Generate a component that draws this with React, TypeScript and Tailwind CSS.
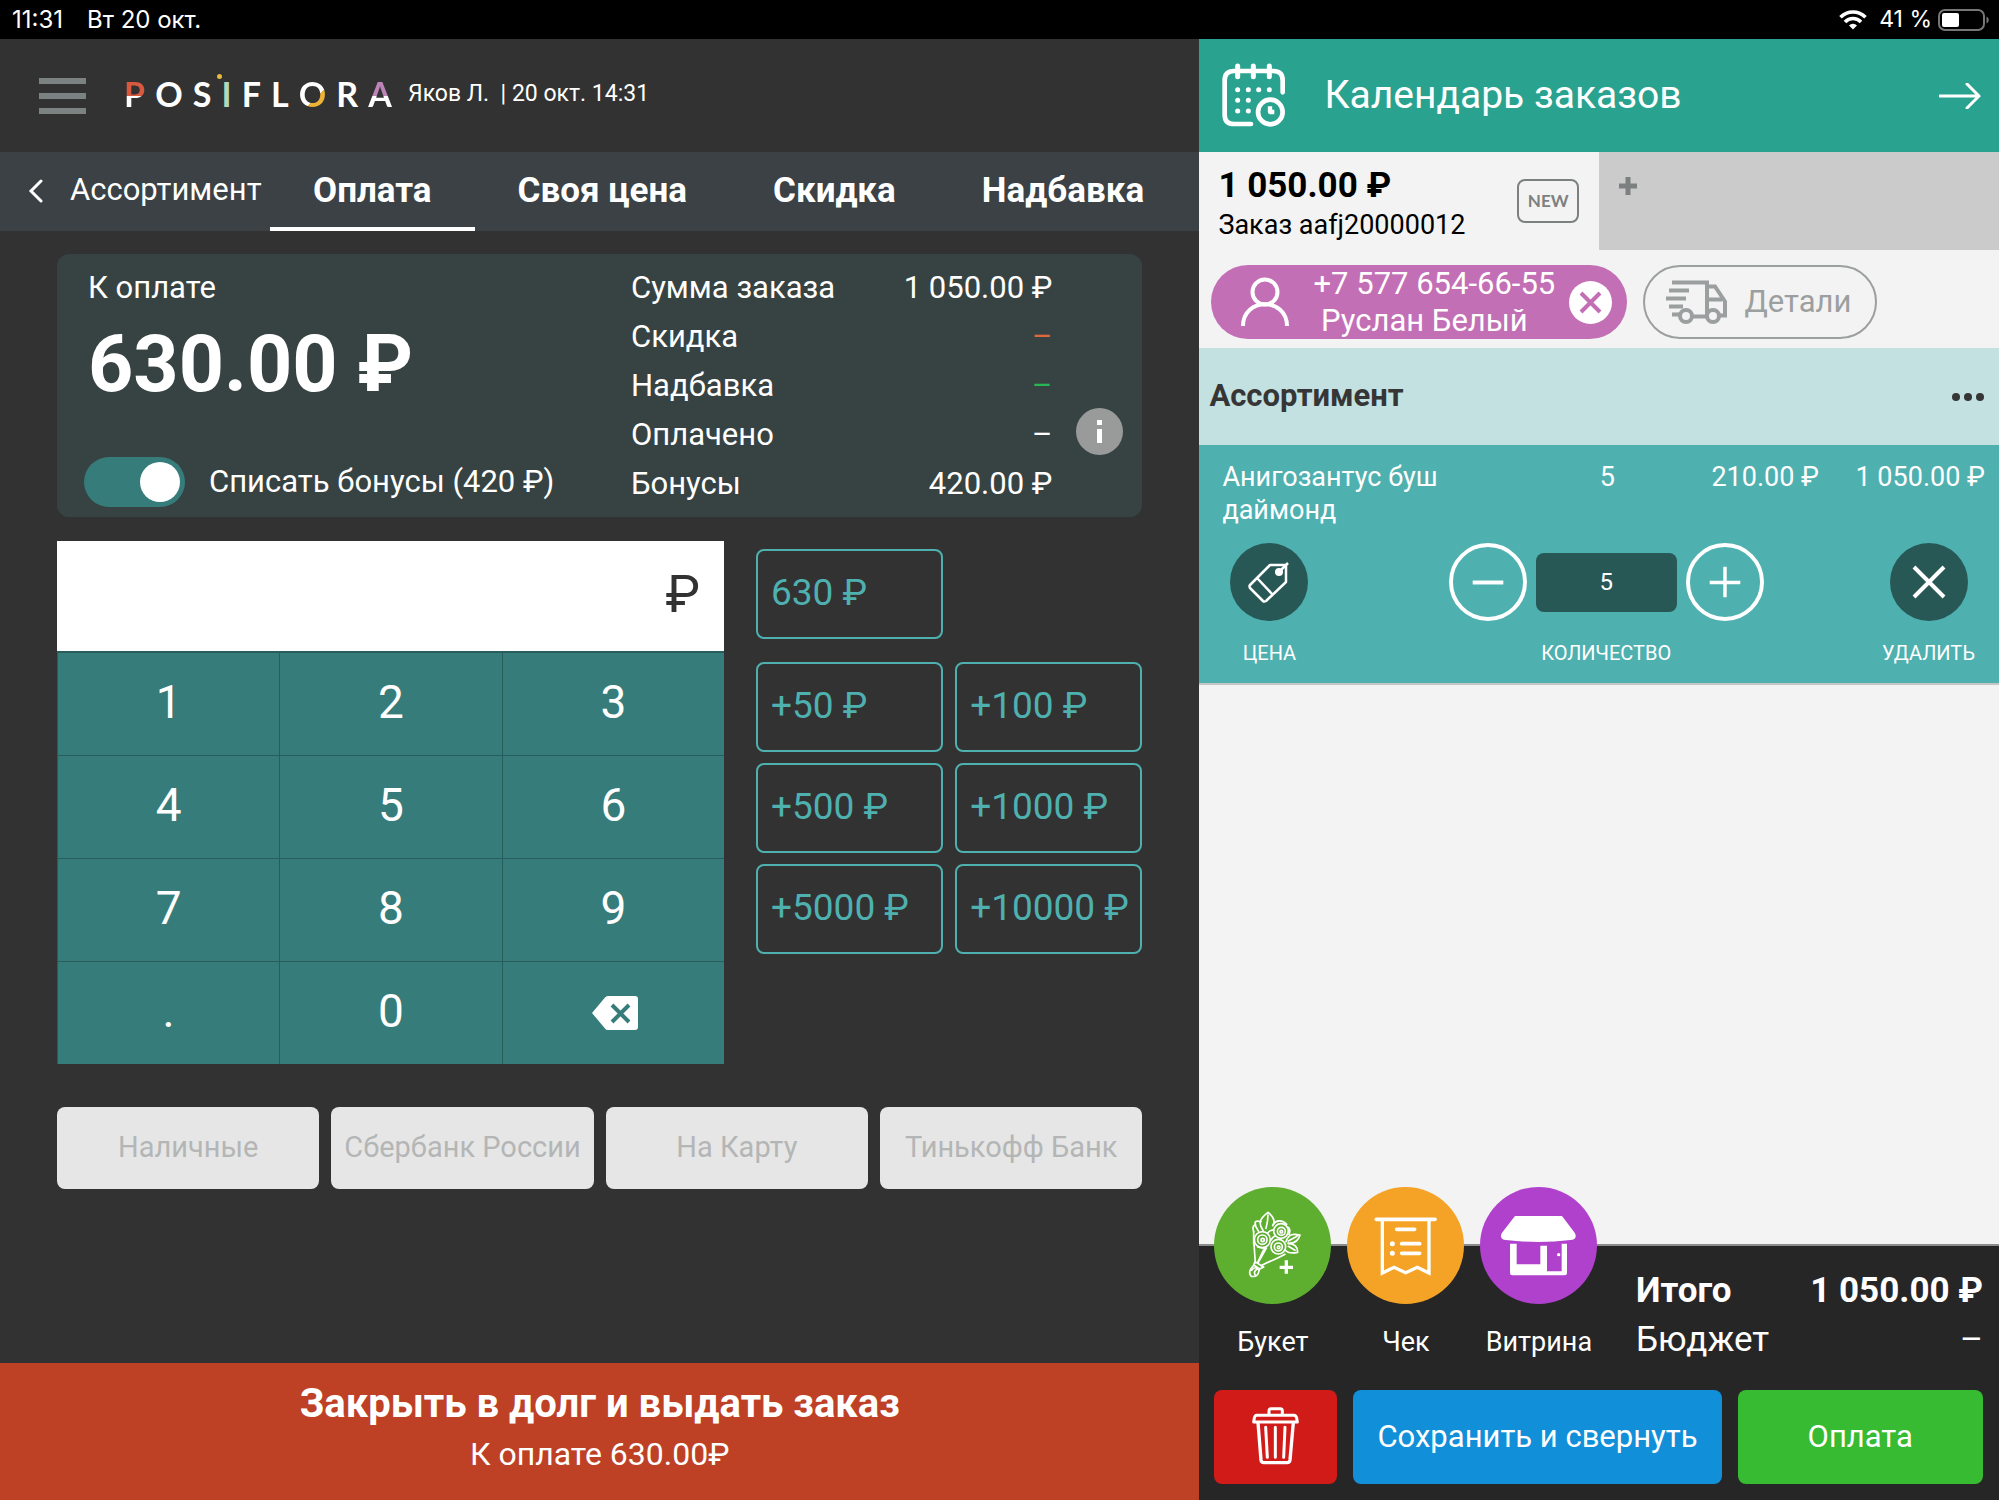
import { useState } from 'react';
import type { ReactNode } from 'react';

const totals = [
  { label: 'Сумма заказа', value: '1 050.00 ₽', color: 'text-white' },
  { label: 'Скидка', value: '–', color: 'text-[#e0663c]' },
  { label: 'Надбавка', value: '–', color: 'text-[#27b854]' },
  { label: 'Оплачено', value: '–', color: 'text-white' },
  { label: 'Бонусы', value: '420.00 ₽', color: 'text-white' }
];

const tabs = ['Оплата', 'Своя цена', 'Скидка', 'Надбавка'];
const keys = ['1', '2', '3', '4', '5', '6', '7', '8', '9', '.', '0'];
const quickSums = ['+50 ₽', '+100 ₽', '+500 ₽', '+1000 ₽', '+5000 ₽', '+10000 ₽'];
const payMethods = ['Наличные', 'Сбербанк России', 'На Карту', 'Тинькофф Банк'];

function StatusBar() {
  return (
    <div className="flex h-[39px] items-center justify-between bg-black pl-3 pr-[10px] font-['Inter',sans-serif] text-[24px] text-white">
      <div className="flex gap-6">
        <span>11:31</span>
        <span>Вт 20 окт.</span>
      </div>
      <div className="flex items-center">
        <svg className="mr-3 h-5 w-7" viewBox="0 0 28 20" fill="none" stroke="#fff" strokeWidth="3.6">
          <path d="M1.5 7.2a17.6 17.6 0 0 1 25 0" />
          <path d="M6 11.9a11.2 11.2 0 0 1 16 0" />
          <path d="M14 19.6l-4-4.1a5.6 5.6 0 0 1 8 0z" fill="#fff" stroke="none" />
        </svg>
        <span className="text-[23px]">41 %</span>
        <svg className="ml-1.5 h-[22px] w-[51px]" viewBox="0 0 51 22">
          <rect x="1" y="1" width="45" height="20" rx="6" fill="none" stroke="#767676" strokeWidth="2" />
          <rect x="4" y="4" width="17" height="14" rx="2" fill="#fff" />
          <path d="M48.500 7.500c3 1.500 3 5.500 0 7z" fill="#767676" />
        </svg>
      </div>
    </div>
  );
}

function Logo() {
  return (
    <div
      className="flex w-[268px] justify-between pb-1 font-['Lato',sans-serif] text-[34px] font-bold leading-10 text-white"
      aria-label="Posiflora"
    >
      <span className="bg-[linear-gradient(#d9593f_56%,#fff_56%)] bg-clip-text text-transparent">P</span>
      <span>O</span>
      <span>S</span>
      <span className="relative text-[#b5d8b8]">
        I
        <span className="absolute -left-1 top-0 size-[5px] rounded-full bg-[#e9b93a]" />
      </span>
      <span>F</span>
      <span>L</span>
      <span className="bg-[linear-gradient(135deg,#fff_60%,#ecb436_60%)] bg-clip-text text-transparent">O</span>
      <span>R</span>
      <span className="bg-[linear-gradient(#bd84b8_54%,#fff_54%)] bg-clip-text text-transparent">A</span>
    </div>
  );
}

function PaymentHeader() {
  return (
    <header className="flex h-[113px] items-center pl-[39px]">
      <button type="button" aria-label="Меню" className="mr-[38px] flex flex-col gap-[9px]">
        <span className="h-1.5 w-[47px] bg-[#7c8282]" />
        <span className="h-1.5 w-[47px] bg-[#7c8282]" />
        <span className="h-1.5 w-[47px] bg-[#7c8282]" />
      </button>
      <Logo />
      <p className="ml-4 pb-0.5 text-[23px] text-white">Яков Л.&nbsp; | 20 окт. 14:31</p>
    </header>
  );
}

function PaymentTabs() {
  const [active, setActive] = useState('Оплата');
  return (
    <nav className="flex h-[79px] bg-[#3b4144] text-white">
      <button type="button" className="flex w-[270px] items-center gap-[27px] pb-0.5 pl-7 text-[31px]">
        <svg className="h-6 w-[15px]" viewBox="0 0 15 24" fill="none" stroke="#fff" strokeWidth="3">
          <path d="M13 2 3 12l10 10" strokeLinecap="round" />
        </svg>
        Ассортимент
      </button>
      {tabs.map((tab) => (
        <button
          key={tab}
          type="button"
          onClick={() => setActive(tab)}
          className={
            tab === active
              ? 'border-b-4 border-white px-[43px] pt-1 text-[35px] font-bold'
              : 'border-b-4 border-transparent px-[43px] pt-1 text-[35px] font-bold'
          }
        >
          {tab}
        </button>
      ))}
    </nav>
  );
}

function Summary() {
  const [useBonus, setUseBonus] = useState(true);
  return (
    <section className="flex h-[263px] rounded-xl bg-[#374343] pl-[27px] pr-[19px] text-[31px] text-white">
      <div className="flex w-[547px] flex-col pt-[9px]">
        <span className="pl-1 leading-[49px]">К оплате</span>
        <strong className="pl-1 pt-0.5 text-[79px] font-bold leading-[100px]">630.00 ₽</strong>
        <label className="mt-[43px] flex h-[50px] items-center gap-6">
          <input
            type="checkbox"
            checked={useBonus}
            onChange={(e) => setUseBonus(e.target.checked)}
            className="peer sr-only"
          />
          <span className="flex h-[50px] w-[101px] items-center rounded-full bg-gray-500 px-[5px] peer-checked:justify-end peer-checked:bg-[#367c7a]">
            <span className="size-10 rounded-full bg-white" />
          </span>
          Списать бонусы (420 ₽)
        </label>
      </div>
      <dl className="flex-1 pt-[9px] leading-[49px]">
        {totals.map((row) => (
          <div key={row.label} className="flex justify-between">
            <dt>{row.label}</dt>
            <dd className={row.color}>{row.value}</dd>
          </div>
        ))}
      </dl>
      <div className="flex w-[71px] items-end justify-end pb-[62px]">
        <button type="button" aria-label="Информация" className="size-[47px] rounded-full bg-[#999a9a]">
          <svg viewBox="0 0 47 47" fill="#fff">
            <path d="M21 12h5v5h-5zM21 21h5v14h-5z" />
          </svg>
        </button>
      </div>
    </section>
  );
}

function Keypad() {
  return (
    <div className="w-[667px]">
      <label className="flex h-[110px] items-center bg-white px-6 pb-0.5 text-[52px] text-[#323232]">
        <input type="text" inputMode="decimal" aria-label="Сумма" className="min-w-0 flex-1 text-right outline-none" />
        ₽
      </label>
      <div className="grid grid-cols-3 gap-px bg-[#285d5b] pl-px pt-0.5 text-[46px] text-white">
        {keys.map((key) => (
          <button key={key} type="button" className="h-[102px] bg-[#367c7a] pb-1">
            {key}
          </button>
        ))}
        <button type="button" aria-label="Стереть" className="flex h-[102px] items-center justify-center bg-[#367c7a] pl-1">
          <svg className="h-[34px] w-[46px]" viewBox="0 0 46 34">
            <path d="M13 1.500Q14 0 16 0h27q3 0 3 3v28q0 3-3 3H16q-2 0-3-1.500L0 17z" fill="#fff" />
            <path d="m20 9 17 17M37 9 20 26" stroke="#367c7a" strokeWidth="4" />
          </svg>
        </button>
      </div>
    </div>
  );
}

function QuickSum({ children }: { children: ReactNode }) {
  return (
    <button type="button" className="h-[90px] whitespace-nowrap rounded-lg border-2 border-[#4fb0b0] pb-0.5 pl-[13px] text-left">
      {children}
    </button>
  );
}

function PaymentPane() {
  return (
    <main className="flex flex-col bg-[#323232]">
      <PaymentHeader />
      <PaymentTabs />
      <div className="flex flex-1 flex-col px-[57px] pt-[23px]">
        <Summary />
        <div className="mt-6 flex">
          <Keypad />
          <div className="ml-8 mt-2 grid flex-1 grid-cols-2 content-start gap-x-3 gap-y-[11px] text-[37px] text-[#4fb0b0]">
            <QuickSum>630 ₽</QuickSum>
            <div className="h-[102px]" />
            {quickSums.map((sum) => (
              <QuickSum key={sum}>{sum}</QuickSum>
            ))}
          </div>
        </div>
        <div className="mt-[43px] grid grid-cols-4 gap-3">
          {payMethods.map((method) => (
            <button
              key={method}
              type="button"
              disabled
              className="h-[82px] whitespace-nowrap rounded-lg bg-[#e6e6e6] text-[29px] text-[#b4b6b6]"
            >
              {method}
            </button>
          ))}
        </div>
      </div>
      <button type="button" className="flex h-[137px] flex-col items-center bg-[#be4126] pt-4 text-white">
        <span className="text-[40px] font-bold leading-[50px]">Закрыть в долг и выдать заказ</span>
        <span className="text-[32px] leading-[50px]">К оплате 630.00₽</span>
      </button>
    </main>
  );
}

function CalendarIcon() {
  return (
    <svg className="h-[65px] w-[65px]" viewBox="62 40 195 195" fill="none" stroke="#fff" strokeWidth="14" strokeLinecap="round">
      <path d="M247 128V92q0-28-28-28H101q-28 0-28 28v103q0 28 28 28h51" />
      <path d="M112 49v32M159 49v32M207 49v32" strokeWidth="15" />
      <path d="M112 120h.1M144 120h.1M175 120h.1M207 120h.1M112 152h.1M144 152h.1M112 184h.1M144 184h.1" strokeWidth="15" />
      <circle cx="210" cy="187" r="37" />
      <path d="M209 170v17h13" strokeLinecap="butt" strokeLinejoin="round" strokeWidth="13" />
    </svg>
  );
}

function OrderTabs() {
  return (
    <div className="grid h-[98px] grid-cols-2">
      <button type="button" className="flex items-center justify-between pl-[19px] pr-5 text-left text-black">
        <span className="flex flex-col pt-1.5">
          <strong className="text-[35px] font-bold leading-[42px]">1 050.00 ₽</strong>
          <span className="text-[27px] leading-9">Заказ aafj20000012</span>
        </span>
        <span className="flex h-11 w-[62px] items-center justify-center rounded-lg border-2 border-[#7d8080] font-['Lato',sans-serif] text-[17px] font-bold text-[#7d8080]">
          NEW
        </span>
      </button>
      <button type="button" aria-label="Новый заказ" className="flex items-start bg-[#cbcbcb] pl-5 pt-[25px]">
        <svg className="size-[18px]" viewBox="0 0 18 18">
          <path d="M9 0v18M0 9h18" stroke="#7d8080" strokeWidth="5" />
        </svg>
      </button>
    </div>
  );
}

function ClientRow() {
  return (
    <div className="flex h-[98px] gap-4 pl-3 pt-[15px]">
      <div className="flex h-[74px] w-[416px] items-center rounded-full bg-[#c36fb5] pl-[30px] text-white">
        <svg className="h-[50px] w-12 shrink-0" viewBox="0 0 48 50" fill="none" stroke="#fff" strokeWidth="4">
          <circle cx="24" cy="15" r="12.500" />
          <path d="M2 49c0-29 44-29 44 0" />
        </svg>
        <div className="flex flex-1 flex-col whitespace-nowrap pl-[10px] text-center text-[31px] leading-[37px]">
          <span>+7 577 654-66-55</span>
          <span className="pr-5">Руслан Белый</span>
        </div>
        <button type="button" aria-label="Убрать клиента" className="mr-[15px] size-[43px] rounded-full bg-white">
          <svg viewBox="0 0 43 43" stroke="#c36fb5" strokeWidth="4">
            <path d="m12 12 19 19M31 12 12 31" />
          </svg>
        </button>
      </div>
      <button
        type="button"
        className="flex h-[74px] w-[234px] items-center gap-4 rounded-full border-2 border-[#9c9f9f] pl-[21px] text-[31px] text-[#9c9f9f]"
      >
        <svg className="h-11 w-[62px]" viewBox="0 0 62 44" fill="none" stroke="#9c9f9f" strokeWidth="4">
          <path d="M6 2.500h35v32M3 10.500h20M0 18.500h20M3 26.500h14M41 6.500h8l10 15v14h-5M6 34.500h8M27 36.500h13M41 19.500h15" />
          <circle cx="20" cy="36" r="6" />
          <circle cx="47" cy="36" r="6" />
        </svg>
        Детали
      </button>
    </div>
  );
}

function OrderItem() {
  const [count, setCount] = useState(5);
  return (
    <article className="border-b-2 border-[#c4c6c6] bg-[#4fb0b0] text-white">
      <div className="flex pl-[23px] pr-[14px] pt-4 text-[27px] leading-[33px]">
        <span className="w-[285px] pr-4">Анигозантус буш даймонд</span>
        <span className="w-[200px] text-center">5</span>
        <span className="flex-1 whitespace-nowrap text-right">210.00 ₽</span>
        <span className="w-[166px] whitespace-nowrap text-right">1 050.00 ₽</span>
      </div>
      <div className="flex justify-between pb-[10px] pl-[31px] pr-6 pt-4 text-[20px]">
        <button type="button" className="flex flex-col items-center gap-3">
          <svg className="size-[78px]" viewBox="0 0 78 78" fill="none" stroke="#fff" strokeWidth="2.500" strokeLinejoin="round">
            <circle cx="39" cy="39" r="39" fill="#275856" stroke="none" />
            <path d="M40 22h16v17L36 58q-2 1-3 0L20 45q-1-2 0-3zM27 35l16 17" />
            <circle cx="49" cy="29" r="4" fill="#fff" stroke="none" />
            <path d="m49 29 9-9" />
          </svg>
          <span className="leading-10">ЦЕНА</span>
        </button>
        <div className="flex flex-col items-center gap-3 pl-[22px]">
          <div className="flex items-center gap-[9px]">
            <button type="button" aria-label="Меньше" onClick={() => setCount(count - 1)}>
              <svg className="size-[78px]" viewBox="0 0 79 79" fill="none" stroke="#fff" strokeWidth="4">
                <circle cx="39.500" cy="39.500" r="37.500" />
                <path d="M24 40h31" />
              </svg>
            </button>
            <input
              type="text"
              aria-label="Количество"
              value={count}
              onChange={(e) => setCount(Number(e.target.value) || 0)}
              className="h-[59px] w-[141px] rounded-lg bg-[#275856] text-center text-[24px]"
            />
            <button type="button" aria-label="Больше" onClick={() => setCount(count + 1)}>
              <svg className="size-[78px]" viewBox="0 0 79 79" fill="none" stroke="#fff" strokeWidth="4">
                <circle cx="39.500" cy="39.500" r="37.500" />
                <path d="M24 40h31M39.500 24v31" strokeWidth="3.500" />
              </svg>
            </button>
          </div>
          <span className="leading-10">КОЛИЧЕСТВО</span>
        </div>
        <button type="button" className="flex flex-col items-center gap-3">
          <svg className="size-[78px]" viewBox="0 0 78 78" stroke="#fff" strokeWidth="4">
            <circle cx="39" cy="39" r="39" fill="#275856" stroke="none" />
            <path d="m24 24 30 30M54 24 24 54" />
          </svg>
          <span className="leading-10">УДАЛИТЬ</span>
        </button>
      </div>
    </article>
  );
}

function BouquetIcon() {
  return (
    <svg viewBox="27 20 351 351" fill="none" stroke="#fff" strokeWidth="5" strokeLinejoin="round" strokeLinecap="round">
      <path d="M174 150c-14-20-12-34 15-54 18 14 24 26 14 40M189 104c0 14-2 24-6 40" />
      <path d="M168 124c-8-2-16-2-18 2 0 8 4 18 10 26M149 134c-6 4-6 12-3 20" />
      <circle cx="228" cy="152" r="22" />
      <circle cx="229" cy="153" r="12" />
      <circle cx="229" cy="154" r="4" />
      <circle cx="172" cy="178" r="24" />
      <circle cx="172" cy="178" r="14" />
      <circle cx="173" cy="179" r="5" />
      <circle cx="220" cy="199" r="22" />
      <circle cx="220" cy="200" r="12" />
      <circle cx="221" cy="201" r="4" />
      <path d="M205 132c6-12 26-16 40 0M248 140c8 4 8 12 4 22M188 158c6-8 10-10 18-8M197 180c6-6 4-8 12-12" />
      <path d="M243 184c8-24 22-24 42-20-6 20-20 26-36 24M250 182l26-14M250 190c20 0 28 8 28 26-20 4-32 0-38-8M250 198l20 12" />
      <path d="M146 152v38M147 190l4 58M158 200l20 4-20 42M184 203l-24 43M240 222c-24 14-42 18-72 34" />
      <path d="M150 244l26 16-12 6-18-12z" />
      <path d="M147 254c-14 14-16 26-8 34 14 2 22-2 24-22M140 270c6-10 16-10 20-2M152 286c-6-8-4-14 4-20" />
      <path d="M244 240v40M224 261h40" strokeWidth="10" strokeLinecap="butt" />
    </svg>
  );
}

function ReceiptIcon() {
  return (
    <svg viewBox="426 20 351 351" fill="none" stroke="#fff" strokeWidth="10" strokeLinecap="round">
      <path d="M514 117h176" strokeWidth="11" />
      <path d="M532 120v158l35-17 35 16 35-16 35 17V120" />
      <path d="M575 147h54M590 190h54M590 219h54" strokeWidth="11" />
      <path d="M562 190h.1M562 219h.1" strokeWidth="15" />
    </svg>
  );
}

function ShopIcon() {
  return (
    <svg viewBox="825 20 351 351" fill="#fff">
      <path d="M930 107h141l38 50c8 14 0 22-12 22-66 8-128 8-194 0-12 0-20-8-12-22z" />
      <path d="M915 190h20v62h71v-56h20v77h44v-83h16v88q0 7-7 7H922q-7 0-7-7z" />
      <circle cx="1061" cy="223" r="5" />
    </svg>
  );
}

const shortcuts = [
  { label: 'Букет', color: 'bg-[#5eae30]', icon: <BouquetIcon /> },
  { label: 'Чек', color: 'bg-[#f4a327]', icon: <ReceiptIcon /> },
  { label: 'Витрина', color: 'bg-[#b041cd]', icon: <ShopIcon /> }
];

function OrderFooter() {
  return (
    <footer className="border-t-2 border-[#8b8b8b] bg-[#262626] pb-4 pl-[15px] pr-4 text-white">
      <div className="flex justify-between">
        <div className="-mt-[59px] flex gap-4">
          {shortcuts.map((item) => (
            <button key={item.label} type="button" className="flex w-[117px] flex-col items-center text-[27px]">
              <span className={`size-[117px] rounded-full ${item.color}`}>{item.icon}</span>
              <span className="mt-[18px] leading-10">{item.label}</span>
            </button>
          ))}
        </div>
        <dl className="w-[347px] pt-5 text-[35px] leading-[49px]">
          <div className="flex justify-between font-bold">
            <dt>Итого</dt>
            <dd>1 050.00 ₽</dd>
          </div>
          <div className="flex justify-between">
            <dt>Бюджет</dt>
            <dd>–</dd>
          </div>
        </dl>
      </div>
      <div className="mt-[26px] flex h-[94px] gap-4 text-[31px]">
        <button type="button" aria-label="Удалить заказ" className="w-[123px] rounded-lg bg-[#d01b19]">
          <svg className="h-[94px] w-[123px]" viewBox="28 630 369 282" fill="none" stroke="#fff" strokeWidth="9" strokeLinecap="round" strokeLinejoin="round">
            <path d="M193 702v-10q0-6 6-6h28q6 0 6 6v10" />
            <path d="M156 706h112q6 0 8 8l2 12H147l2-12q2-8 7-8z" />
            <path d="M160 728l9 112q1 8 9 8h69q8 0 9-8l10-112" strokeWidth="10" />
            <path d="M183 742l5 90M212 742v90M241 742l-4 90" />
          </svg>
        </button>
        <button type="button" className="flex-[3] rounded-lg bg-[#128fd9]">Сохранить и свернуть</button>
        <button type="button" className="flex-[2] rounded-lg bg-[#36bb32]">Оплата</button>
      </div>
    </footer>
  );
}

function OrderPane() {
  return (
    <aside className="flex flex-col bg-[#f3f3f3]">
      <button type="button" className="flex h-[113px] items-center bg-[#29a38f] pl-[22px] pr-[18px] text-[39px] text-white">
        <CalendarIcon />
        <span className="ml-[38px]">Календарь заказов</span>
        <svg className="ml-auto h-[26px] w-[42px]" viewBox="0 0 42 26" fill="none" stroke="#fff" strokeWidth="3">
          <path d="M1 13h39M28 1l12 12-12 12" strokeLinecap="round" />
        </svg>
      </button>
      <OrderTabs />
      <ClientRow />
      <div className="flex h-[97px] items-center justify-between bg-[#c4e1e1] pl-[10px] pr-[15px]">
        <h2 className="text-[31px] font-bold text-[#363636]">Ассортимент</h2>
        <button type="button" aria-label="Ещё" className="flex gap-1">
          <span className="size-2 rounded-full bg-[#363636]" />
          <span className="size-2 rounded-full bg-[#363636]" />
          <span className="size-2 rounded-full bg-[#363636]" />
        </button>
      </div>
      <OrderItem />
      <div className="flex-1" />
      <OrderFooter />
    </aside>
  );
}

export default function App() {
  return (
    <div className="flex min-h-screen flex-col font-['Roboto','Noto_Sans',sans-serif]">
      <StatusBar />
      <div className="grid flex-1 grid-cols-[minmax(0,3fr)_minmax(0,2fr)]">
        <PaymentPane />
        <OrderPane />
      </div>
    </div>
  );
}
